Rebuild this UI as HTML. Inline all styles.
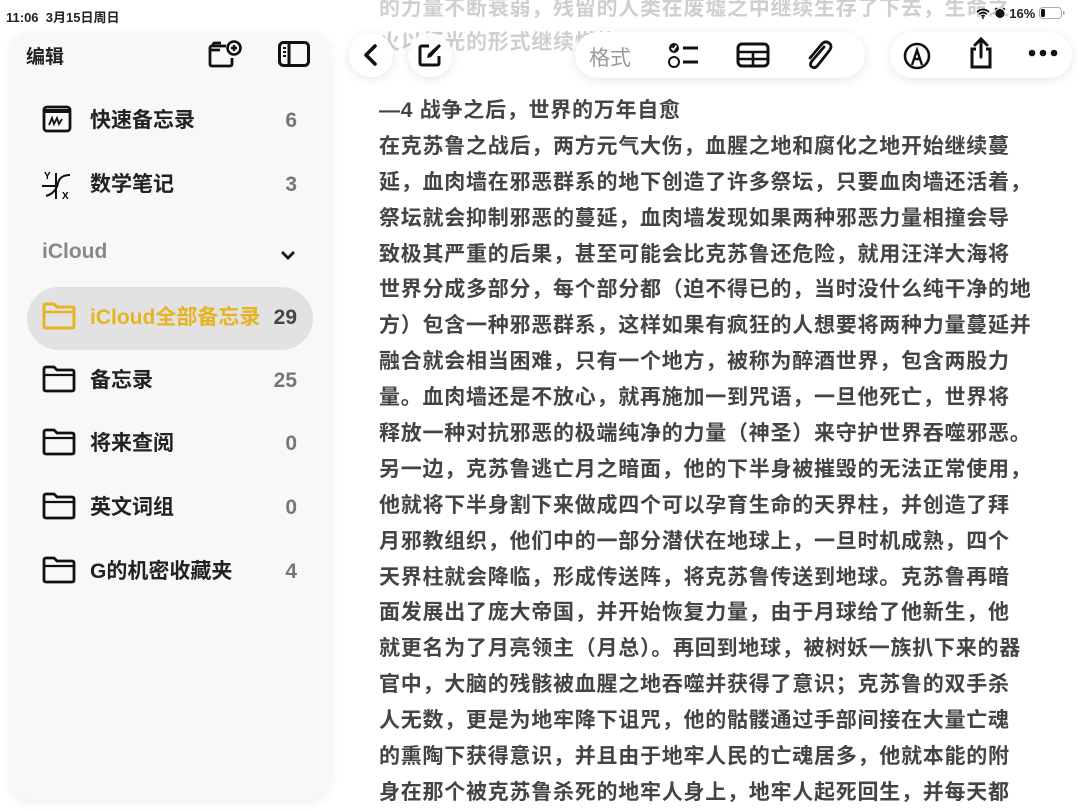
<!DOCTYPE html>
<html><head><meta charset="utf-8"><style>
*{margin:0;padding:0;box-sizing:border-box}
body{width:1080px;height:810px;overflow:hidden;background:#fff;font-family:"Liberation Sans","Noto Sans CJK SC",sans-serif;position:relative;color:#222}
.abs{position:absolute}
.fade{color:#cfcfcf;font-size:21px;letter-spacing:0.75px;white-space:nowrap;left:379px;font-weight:bold}
.body{left:379px;top:93px;font-size:21px;line-height:35.9px;color:#444;font-weight:bold;letter-spacing:0.75px}
.body div{white-space:nowrap;height:35.9px}
.side{left:10px;top:32px;width:320px;height:768px;background:#f8f8f8;border-radius:22px;box-shadow:0 2px 10px rgba(0,0,0,0.08)}
.row{position:absolute;left:0;width:320px;height:40px;font-size:21px;font-weight:bold;line-height:28px}
.row .t{position:absolute;left:80px;top:6px;white-space:nowrap}
.row .c{position:absolute;right:33px;top:6px;color:#777}
.row svg{position:absolute;left:32px;top:4px}
.pill{background:#fff;border-radius:24px;box-shadow:0 2px 10px rgba(0,0,0,0.1)}
</style></head><body>
<div class="abs fade" style="top:-8px">的力量不断衰弱，残留的人类在废墟之中继续生存了下去，生命之</div>
<div class="abs fade" style="top:26px">火以炬光的形式继续燃烧</div>

<div class="abs" style="left:6px;top:7px;font-size:13px;font-weight:bold">11:06&nbsp;&nbsp;3月15日周日</div>
<div class="abs" style="left:976px;top:6px;font-size:13px;font-weight:bold;white-space:nowrap">
<svg width="14" height="11" viewBox="0 0 14 11" style="vertical-align:-1px"><path d="M1 4Q7-1 13 4M3.2 6.2Q7 3 10.8 6.2M5.3 8.3Q7 7 8.7 8.3" stroke="#111" stroke-width="1.8" fill="none"/><circle cx="7" cy="10" r="1" fill="#111"/></svg>
<svg width="12" height="12" viewBox="0 0 12 12" style="vertical-align:-1px"><circle cx="6" cy="6.5" r="4.5" fill="#111"/><path d="M1 2.5L3 1M11 2.5L9 1" stroke="#111" stroke-width="1.5"/></svg>
16% <svg width="26" height="12" viewBox="0 0 26 12" style="vertical-align:-1px"><rect x="0.5" y="0.5" width="22" height="11" rx="3.5" fill="none" stroke="#aaa"/><rect x="2" y="2" width="4" height="8" rx="1.5" fill="#111"/><rect x="24" y="4" width="1.5" height="4" fill="#aaa"/></svg></div>

<div class="abs side">
 <div class="abs" style="left:16px;top:10px;font-size:19px;font-weight:bold">编辑</div>
 <svg class="abs" style="left:198px;top:8px" width="36" height="28" viewBox="0 0 36 28"><path d="M18 6H4Q2 6 2 8V24Q2 26 4 26H22Q24 26 24 24V18" fill="none" stroke="#111" stroke-width="2.8"/><path d="M2 10H12M4 6L6 3H13" stroke="#111" stroke-width="2.8" fill="none"/><circle cx="26" cy="8" r="6.5" fill="none" stroke="#111" stroke-width="2.6"/><path d="M26 5V11M23 8H29" stroke="#111" stroke-width="2.4"/></svg>
 <svg class="abs" style="left:268px;top:9px" width="32" height="26" viewBox="0 0 32 26"><rect x="1.5" y="1.5" width="29" height="23" rx="4" fill="none" stroke="#111" stroke-width="3"/><path d="M11 2V24" stroke="#111" stroke-width="3"/><path d="M5 7H8M5 11H8M5 15H8" stroke="#111" stroke-width="2"/></svg>
 <div class="row" style="top:69px"><svg width="30" height="28" viewBox="0 0 30 28"><rect x="2" y="2" width="26" height="24" rx="3" fill="none" stroke="#111" stroke-width="2.8"/><path d="M2 6H28" stroke="#111" stroke-width="4"/><path d="M7 20L10 13L12 19L15 13L17 19L20 14" fill="none" stroke="#111" stroke-width="1.8"/></svg><span class="t">快速备忘录</span><span class="c">6</span></div>
 <div class="row" style="top:133px"><svg width="34" height="32" viewBox="0 0 34 32"><text x="2" y="10" font-size="10" font-weight="bold" font-family="Liberation Sans">Y</text><text x="20" y="30" font-size="10" font-weight="bold" font-family="Liberation Sans">X</text><path d="M0 17H16M14 4V30M4 27Q14 24 16 14Q18 6 28 6" stroke="#111" stroke-width="2" fill="none"/></svg><span class="t">数学笔记</span><span class="c">3</span></div>
 <div class="abs" style="left:32px;top:208px;font-size:21px;font-weight:bold;color:#888">iCloud</div>
 <svg class="abs" style="left:270px;top:217px" width="16" height="12" viewBox="0 0 16 12"><path d="M2 3L8 9L14 3" fill="none" stroke="#111" stroke-width="2.8"/></svg>
 <div class="abs" style="left:17px;top:255px;width:286px;height:63px;border-radius:32px;background:#e2e2e2"></div>
 <div class="row" style="top:266px"><svg width="34" height="28" viewBox="0 0 34 28"><path d="M2 4Q2 2 4 2H12L15 5H30Q32 5 32 7V24Q32 26 30 26H4Q2 26 2 24Z" fill="none" stroke="#e6b422" stroke-width="3"/><path d="M2 10H32" stroke="#e6b422" stroke-width="2.5"/></svg><span class="t" style="color:#e6b422">iCloud全部备忘录</span><span class="c" style="color:#444">29</span></div>
 <div class="row" style="top:329px"><svg width="34" height="28" viewBox="0 0 34 28"><path d="M2 4Q2 2 4 2H12L15 5H30Q32 5 32 7V24Q32 26 30 26H4Q2 26 2 24Z" fill="none" stroke="#111" stroke-width="2.8"/><path d="M2 10H32" stroke="#111" stroke-width="2.2"/></svg><span class="t">备忘录</span><span class="c">25</span></div>
 <div class="row" style="top:392px"><svg width="34" height="28" viewBox="0 0 34 28"><path d="M2 4Q2 2 4 2H12L15 5H30Q32 5 32 7V24Q32 26 30 26H4Q2 26 2 24Z" fill="none" stroke="#111" stroke-width="2.8"/><path d="M2 10H32" stroke="#111" stroke-width="2.2"/></svg><span class="t">将来查阅</span><span class="c">0</span></div>
 <div class="row" style="top:456px"><svg width="34" height="28" viewBox="0 0 34 28"><path d="M2 4Q2 2 4 2H12L15 5H30Q32 5 32 7V24Q32 26 30 26H4Q2 26 2 24Z" fill="none" stroke="#111" stroke-width="2.8"/><path d="M2 10H32" stroke="#111" stroke-width="2.2"/></svg><span class="t">英文词组</span><span class="c">0</span></div>
 <div class="row" style="top:520px"><svg width="34" height="28" viewBox="0 0 34 28"><path d="M2 4Q2 2 4 2H12L15 5H30Q32 5 32 7V24Q32 26 30 26H4Q2 26 2 24Z" fill="none" stroke="#111" stroke-width="2.8"/><path d="M2 10H32" stroke="#111" stroke-width="2.2"/></svg><span class="t">G的机密收藏夹</span><span class="c">4</span></div>
</div>

<div class="abs pill" style="left:349px;top:33px;width:44px;height:44px;border-radius:22px;background:rgba(255,255,255,0.9)"></div>
<svg class="abs" style="left:360px;top:43px" width="22" height="24" viewBox="0 0 22 24"><path d="M15 3L6 12L15 21" fill="none" stroke="#111" stroke-width="3.6" stroke-linecap="round" stroke-linejoin="round"/></svg>
<div class="abs pill" style="left:408px;top:33px;width:44px;height:44px;border-radius:22px;background:rgba(255,255,255,0.9)"></div>
<svg class="abs" style="left:416px;top:41px" width="28" height="28" viewBox="0 0 28 28"><path d="M13 5H6Q4 5 4 7V22Q4 24 6 24H21Q23 24 23 22V15" fill="none" stroke="#111" stroke-width="3"/><path d="M11 17L12 13L23 3L25 5L15 16Z" fill="#111"/></svg>

<div class="abs pill" style="left:575px;top:32px;width:290px;height:46px"></div>
<div class="abs" style="left:589px;top:42px;font-size:21px;color:#999">格式</div>
<svg class="abs" style="left:667px;top:40px" width="34" height="30" viewBox="0 0 34 30"><circle cx="7" cy="8" r="5" fill="#111"/><path d="M4.5 8L6.5 10L9.5 5.5" stroke="#fff" stroke-width="1.6" fill="none"/><circle cx="7" cy="22" r="5" fill="none" stroke="#111" stroke-width="2"/><path d="M16 8H31M16 22H31" stroke="#111" stroke-width="3"/></svg>
<svg class="abs" style="left:736px;top:41px" width="34" height="28" viewBox="0 0 34 28"><rect x="2" y="3" width="30" height="22" rx="4" fill="none" stroke="#111" stroke-width="3"/><path d="M2 11H32M2 18H32M17 11V25" stroke="#111" stroke-width="2.6"/></svg>
<svg class="abs" style="left:802px;top:37px" width="32" height="36" viewBox="0 0 32 36"><path d="M22 10L10 24Q7 28 10 30Q13 32 16 28L27 14Q31 9 27 6Q23 3 19 8L8 21" fill="none" stroke="#111" stroke-width="2.8" stroke-linecap="round"/></svg>

<div class="abs pill" style="left:890px;top:32px;width:182px;height:46px"></div>
<svg class="abs" style="left:902px;top:41px" width="30" height="30" viewBox="0 0 30 30"><circle cx="15" cy="15" r="12" fill="none" stroke="#111" stroke-width="2.6"/><path d="M10 24L15 9L20 24M12 18H18" fill="none" stroke="#111" stroke-width="2.4"/></svg>
<svg class="abs" style="left:966px;top:35px" width="30" height="36" viewBox="0 0 30 36"><path d="M10 14H6V32H24V14H20" fill="none" stroke="#111" stroke-width="3"/><path d="M15 22V4M9 10L15 4L21 10" fill="none" stroke="#111" stroke-width="3" stroke-linecap="round"/></svg>
<svg class="abs" style="left:1028px;top:48px" width="30" height="10" viewBox="0 0 30 10"><circle cx="4" cy="5" r="3.3" fill="#111"/><circle cx="15" cy="5" r="3.3" fill="#111"/><circle cx="26" cy="5" r="3.3" fill="#111"/></svg>

<div class="abs body">
<div>—4 战争之后，世界的万年自愈</div>
<div>在克苏鲁之战后，两方元气大伤，血腥之地和腐化之地开始继续蔓</div>
<div>延，血肉墙在邪恶群系的地下创造了许多祭坛，只要血肉墙还活着，</div>
<div>祭坛就会抑制邪恶的蔓延，血肉墙发现如果两种邪恶力量相撞会导</div>
<div>致极其严重的后果，甚至可能会比克苏鲁还危险，就用汪洋大海将</div>
<div>世界分成多部分，每个部分都（迫不得已的，当时没什么纯干净的地</div>
<div>方）包含一种邪恶群系，这样如果有疯狂的人想要将两种力量蔓延并</div>
<div>融合就会相当困难，只有一个地方，被称为醉酒世界，包含两股力</div>
<div>量。血肉墙还是不放心，就再施加一到咒语，一旦他死亡，世界将</div>
<div>释放一种对抗邪恶的极端纯净的力量（神圣）来守护世界吞噬邪恶。</div>
<div>另一边，克苏鲁逃亡月之暗面，他的下半身被摧毁的无法正常使用，</div>
<div>他就将下半身割下来做成四个可以孕育生命的天界柱，并创造了拜</div>
<div>月邪教组织，他们中的一部分潜伏在地球上，一旦时机成熟，四个</div>
<div>天界柱就会降临，形成传送阵，将克苏鲁传送到地球。克苏鲁再暗</div>
<div>面发展出了庞大帝国，并开始恢复力量，由于月球给了他新生，他</div>
<div>就更名为了月亮领主（月总）。再回到地球，被树妖一族扒下来的器</div>
<div>官中，大脑的残骸被血腥之地吞噬并获得了意识；克苏鲁的双手杀</div>
<div>人无数，更是为地牢降下诅咒，他的骷髅通过手部间接在大量亡魂</div>
<div>的熏陶下获得意识，并且由于地牢人民的亡魂居多，他就本能的附</div>
<div>身在那个被克苏鲁杀死的地牢人身上，地牢人起死回生，并每天都</div>
</div>
</body></html>
